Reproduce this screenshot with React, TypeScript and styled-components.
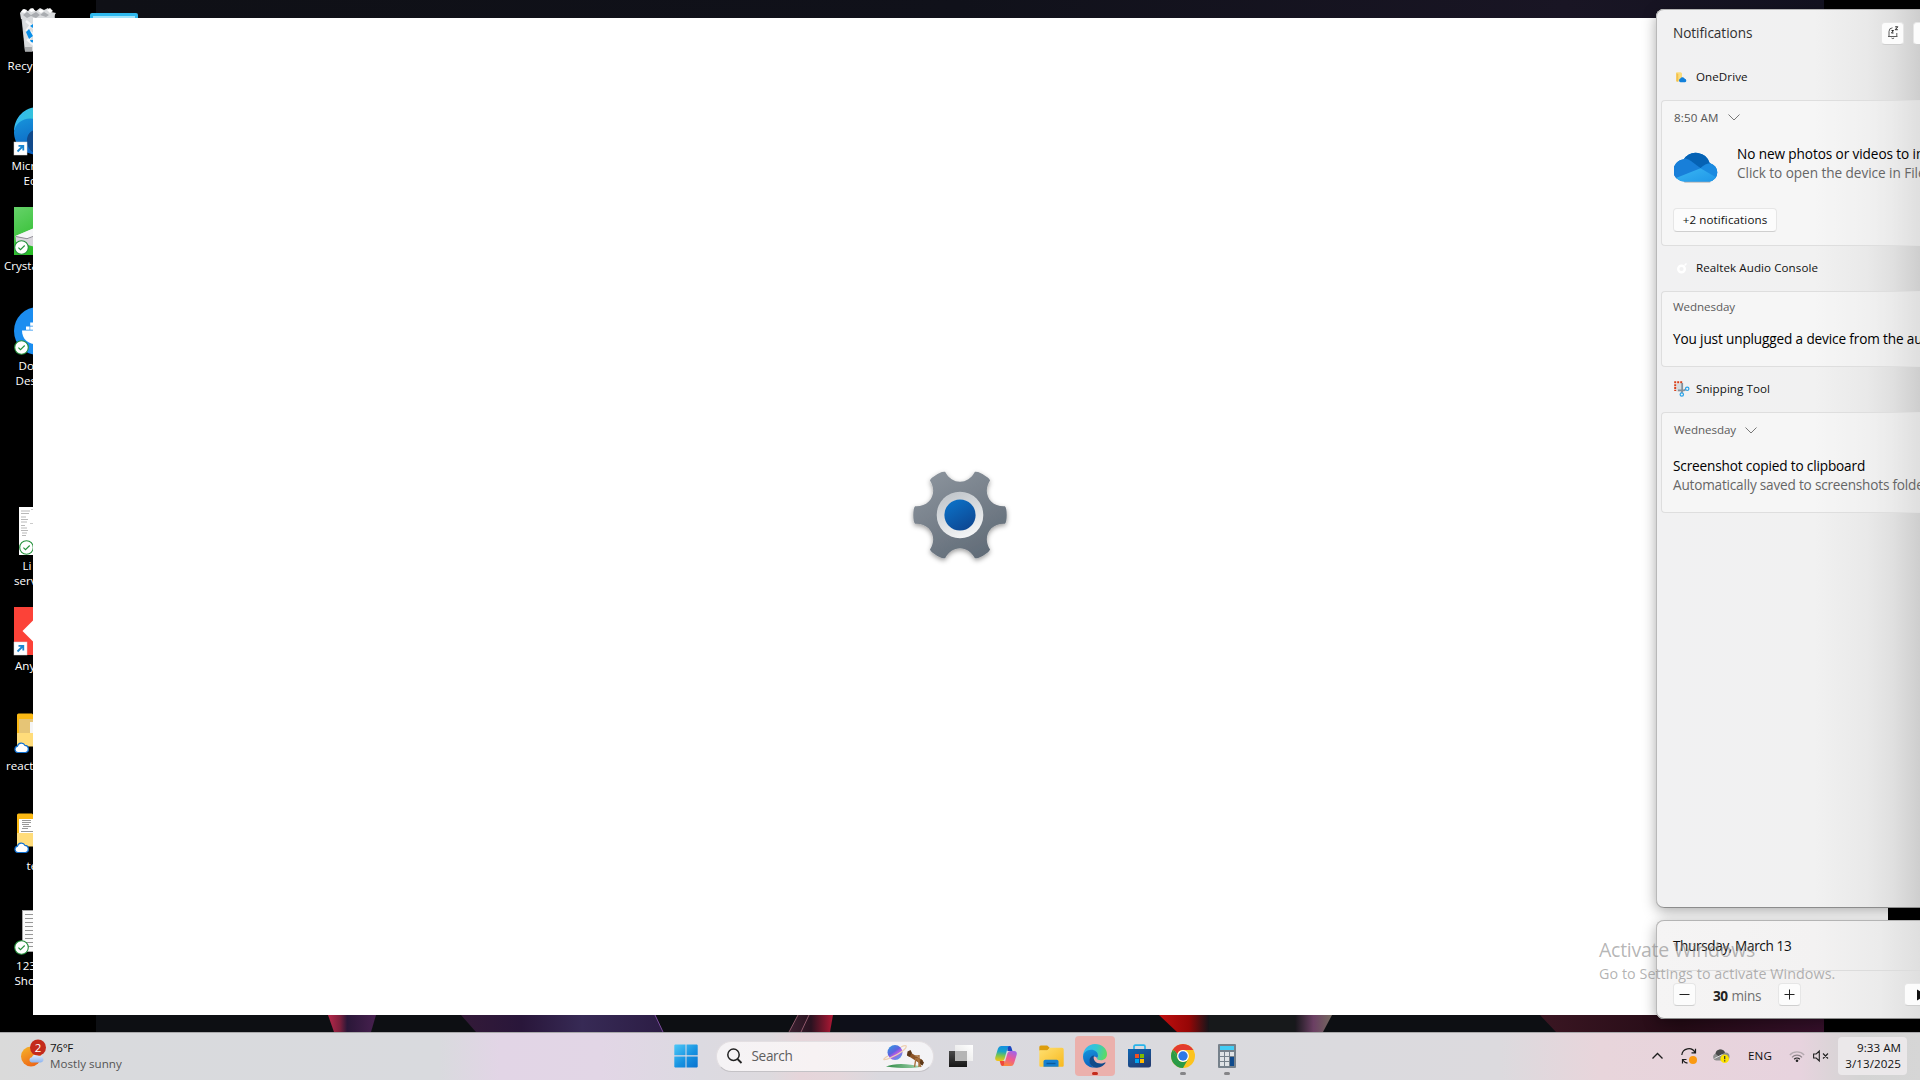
import React from "react";
import styled, { createGlobalStyle } from "styled-components";

const Global = createGlobalStyle`
  * { box-sizing: border-box; }
  body { margin: 0; background: #000; font-family: "Open Sans", "Noto Sans", sans-serif; }
  svg { display: block; flex: none; overflow: visible; }
`;

const Screen = styled.div`
  position: relative;
  width: 1920px;
  height: 1080px;
  overflow: hidden;
  background: #000;
  display: flex;
  flex-direction: column;
`;

const Text = styled.span<{ $size?: number; $track?: number; $color?: string; $weight?: number; $line?: number }>`
  font-size: ${(p) => p.$size ?? 11.6}px;
  letter-spacing: ${(p) => p.$track ?? 0}px;
  color: ${(p) => p.$color ?? "#111"};
  font-weight: ${(p) => p.$weight ?? 400};
  line-height: ${(p) => p.$line ?? 16}px;
  white-space: nowrap;
`;

/* ---------- desktop ---------- */

const Desktop = styled.div`
  position: relative;
  flex: none;
  height: 1032px;
  display: flex;
`;

const Wallpaper = styled.div`
  position: absolute;
  inset: 0 96px 0 96px;
  display: flex;
  flex-direction: column;
  justify-content: flex-end;
  background: linear-gradient(90deg, #0f1016, #10111a 50%, #191524 85%, #131220);
`;

const IconColumn = styled.div<{ $top: number; $left: number }>`
  position: relative;
  display: flex;
  flex-direction: column;
  flex: none;
  width: 76px;
  padding-top: ${(p) => p.$top}px;
  padding-left: ${(p) => p.$left}px;
`;

const IconCell = styled.div<{ $skip?: boolean }>`
  height: 100px;
  margin-bottom: ${(p) => (p.$skip ? 100 : 0)}px;
  display: flex;
  flex-direction: column;
`;

const IconArt = styled.div`
  padding-left: 14px;
  height: 51px;
`;

const IconLabel = styled(Text)<{ $indent: number }>`
  padding-left: ${(p) => p.$indent}px;
  color: #fff;
  line-height: 15px;
`;

const Check = () => (
  <g>
    <circle cx="7.5" cy="40.5" r="6.8" fill="#fff" stroke="#23903a" strokeWidth="1.1" />
    <path d="M4.4 40.6l2.1 2.1 4.2-4.2" fill="none" stroke="#23903a" strokeWidth="1.1" />
  </g>
);
const Shortcut = () => (
  <g>
    <rect x="0" y="35" width="13" height="13" fill="#fff" stroke="#d8d8d8" strokeWidth=".5" />
    <path d="M3.5 44.5l5-5M4.5 38.8h4.8v4.8" fill="none" stroke="#1a86d0" strokeWidth="1.8" />
  </g>
);
const CloudBadge = () => (
  <path d="M3.8 45.5a3.2 3.2 0 0 1-.3-6.3 4 4 0 0 1 7.5-.8 3.6 3.6 0 0 1 .6 7.1z" fill="#fff" stroke="#0f6fd0" strokeWidth="1.2" />
);

const Bin = () => (
  <svg width="48" height="48">
    <path d="M7 7l4 37.5h26L41 7z" fill="#c8cacc" />
    <path d="M8 8l3 36h26l3-36z" fill="#dfe1e3" opacity=".8" />
    <path d="M6 6l3-4 5 2 3-3 5 3 4-3 4 2 4-2 3 4 5 1-2 3 1 3H7z" fill="#d9dbdd" />
    <path d="M7 5l3-3 3 1-2 3zM15 3l4-2 2 3-4 1zM24 4l3-2 3 2-3 2zM33 3l3-2 3 3-3 2z" fill="#fff" />
    <path d="M9 8l4-3 4 3 5-3 4 3 4-3 5 3-3 2-6-2-4 3-5-2-4 2z" fill="#a9acb0" />
    <path d="M12 14l5 4-4 5 6 4-5 6 6 5M22 12l-3 8 4 6" stroke="#f5f6f7" strokeWidth="2.5" fill="none" />
    <path d="M16 19l6-4 6 4-3 3-6-1zM15 22l4 7-4 3-3-7zM16 33h8v4l-7-2z" fill="#0a8fe8" />
    <path d="M11 40h7v4.500h-7z" fill="#a8abad" />
  </svg>
);
const EdgeArt = ({ size = 48 }: { size?: number }) => (
  <svg width={size} height={size} viewBox="0 0 48 48">
    <defs>
      <linearGradient id="edgeTop" x1="0" y1=".4" x2="1" y2=".6">
        <stop offset="0" stopColor="#35b8f2" />
        <stop offset=".5" stopColor="#33c6d2" />
        <stop offset="1" stopColor="#5fdc5c" />
      </linearGradient>
      <linearGradient id="edgeBody" x1="0" y1="0" x2=".3" y2="1">
        <stop offset="0" stopColor="#1795dc" />
        <stop offset="1" stopColor="#0b62c0" />
      </linearGradient>
    </defs>
    <path d="M0 25C0 10 11 0 24 0c14 0 24 9.500 24 20 0 8-6 12.500-12 12.500-5 0-8-1.500-8-3 0-1.400 2-2 2-5 0-5-5-9-12-9C8 15.500 1 20 0 25z" fill="url(#edgeTop)" />
    <path d="M0 25c1-8 8-13.500 16-13.500 8 0 14 5 14 12 0 3-2 4-2 6 0-6-12-6-14 2-2 9 6 16 13 16C10 49 0 38 0 25z" fill="url(#edgeBody)" />
    <path d="M27 47.500C18 47.500 12 40 13 32c.8-6 5-9 9-9-3 9 4 16 13 16 4 0 7-1 9-2 .8-.4 1.600.4 1 1.200C41.500 43.500 35 48 27 47.500z" fill="#114a8b" />
  </svg>
);
const EdgeDesktop = () => (
  <svg width="48" height="48">
    <EdgeArt />
    <Shortcut />
  </svg>
);
const Crystal = () => (
  <svg width="48" height="48">
    <defs>
      <linearGradient id="crystalGreen" x1="0" y1="0" x2=".6" y2="1">
        <stop offset="0" stopColor="#66d26a" />
        <stop offset="1" stopColor="#1fb81c" />
      </linearGradient>
    </defs>
    <rect width="48" height="48" fill="url(#crystalGreen)" />
    <path d="M1.500 29l20-8.500V40L2 35z" fill="#d9d6dc" />
    <path d="M1.500 29l20-8.500v8.500l-8 3z" fill="#f6f6f8" />
    <path d="M2 29.500l11 2.200 8-3" stroke="#77747c" fill="none" strokeWidth=".8" />
    <Check />
  </svg>
);
const Docker = () => (
  <svg width="48" height="48">
    <circle cx="24" cy="24" r="24" fill="#1b8df0" />
    <path d="M8 23.500h32c0 9-6 14-16 14S8 32 8 23.500z" fill="#fff" />
    <path d="M12 19.500h3.600v3.200H12zM16.200 19.500h3.600v3.200h-3.600zM16.200 15.600h3.600v3.200h-3.600z" fill="#fff" />
    <Check />
  </svg>
);
const Sheet = () => (
  <svg width="48" height="48">
    <rect x="5" width="38" height="48" fill="#fff" />
    <path d="M7 4h9M7 6.500h8M7 10h5M7 12.500h7M7 15h6M7 18.500h4M7 21h6M7 23.500h7M8 26h5M8 28.500h4" stroke="#b9b9b9" strokeWidth="1" />
    <path d="M17 2.500h3M16 16.500h4" stroke="#ccc" />
    <g transform="translate(5 0)"><Check /></g>
  </svg>
);
const AnyDesk = () => (
  <svg width="48" height="48">
    <rect width="48" height="48" fill="#fc4238" />
    <path d="M8.500 24L24 8.500 39.500 24 24 39.500z" fill="#fff" />
    <Shortcut />
  </svg>
);
const Folder = ({ paper }: { paper?: boolean }) => (
  <svg width="48" height="48">
    <path d="M3 8q0-1.500 1.500-1.500H18l4 4h23V39H3z" fill="#fbb914" />
    {paper ? <rect x="5" y="12" width="38" height="18" fill="#fff" /> : <rect x="5" y="12" width="38" height="20" fill="#e6c576" />}
    {paper ? <path d="M8 13.500h9M8 15.500h9M8 17.500h7M9 19.500h8M8 21.500h6M7 24.500h12" stroke="#999" /> : <path d="M16 15h20v11H16z" fill="#f5f5f5" />}
    <path d="M3 26h42v12q0 1.500-1.500 1.500h-39Q3 39.500 3 38z" fill="#ffdc7a" />
    <CloudBadge />
  </svg>
);
const TextDoc = () => (
  <svg width="48" height="48">
    <rect x="8.500" y="3.500" width="32" height="41" fill="#fbfbfb" stroke="#a5a5a5" />
    <path d="M11 7.500h28M11 11.500h28M11 15.500h28M11 19.500h28M11 23.500h28M11 27.500h28M11 31.500h28M11 35.500h28M14 39.500h28" stroke="#979797" strokeWidth="1" />
    <Check />
  </svg>
);

const desktopIcons: { art: React.ReactNode; lines: [string, number][]; skip?: boolean }[] = [
  { art: <Bin />, lines: [["Recy", 7.5]] },
  { art: <EdgeDesktop />, lines: [["Micr", 11.5], ["Ed", 23.5]] },
  { art: <Crystal />, lines: [["Crysta", 4]] },
  { art: <Docker />, lines: [["Do", 18.5], ["Des", 15.5]], skip: true },
  { art: <Sheet />, lines: [["Li", 22.5], ["serv", 14]] },
  { art: <AnyDesk />, lines: [["Any", 15]] },
  { art: <Folder />, lines: [["react_", 6]] },
  { art: <Folder paper />, lines: [["te", 26.5]] },
  { art: <TextDoc />, lines: [["123", 16], ["Sho", 14.5]] },
];

const MonitorArt = () => (
  <svg width="48" height="48">
    <rect width="48" height="40" rx="2" fill="#2fb9ee" />
    <rect x="3" y="3" width="42" height="34" fill="#9fe4fb" />
  </svg>
);

const WallpaperArt = () => (
  <svg width="1728" height="17" viewBox="96 1015 1728 17">
    <defs>
      <linearGradient id="petal"><stop offset="0" stopColor="#b8284a" /><stop offset=".25" stopColor="#7c1f3c" /><stop offset=".4" stopColor="#2a1738" /><stop offset="1" stopColor="#47204f" /></linearGradient>
      <linearGradient id="violet"><stop offset="0" stopColor="#331a38" /><stop offset=".3" stopColor="#29163a" /><stop offset=".6" stopColor="#372a55" /><stop offset="1" stopColor="#2c1d45" /></linearGradient>
      <linearGradient id="ribbon"><stop offset="0" stopColor="#3a2130" /><stop offset=".5" stopColor="#2a1220" /><stop offset="1" stopColor="#b01834" /></linearGradient>
      <linearGradient id="scarlet"><stop offset="0" stopColor="#c01010" /><stop offset=".6" stopColor="#960606" /><stop offset="1" stopColor="#15151a" /></linearGradient>
      <linearGradient id="mist"><stop offset="0" stopColor="#17171b" /><stop offset=".5" stopColor="#6b3f63" /><stop offset="1" stopColor="#74695f" /></linearGradient>
      <linearGradient id="maroon"><stop offset="0" stopColor="#3a1622" /><stop offset=".5" stopColor="#250b16" /><stop offset="1" stopColor="#35102a" /></linearGradient>
    </defs>
    <rect x="96" y="1015" width="1728" height="17" fill="#0d0f13" />
    <rect x="840" y="1015" width="310" height="17" fill="#0e0f19" />
    <path d="M328 1015h48l-5 17h-37z" fill="url(#petal)" />
    <path d="M461 1015h194l8 17H476z" fill="url(#violet)" />
    <path d="M655 1015l8 17" stroke="#7b4b9c" />
    <path d="M798 1015h35l-3 17h-41z" fill="url(#ribbon)" />
    <path d="M798 1015l-9 17M809 1015l-8 17" stroke="#a7687c" strokeWidth=".8" />
    <path d="M1159 1015h50v17h-32z" fill="url(#scarlet)" />
    <rect x="1209" y="1015" width="90" height="17" fill="#17191b" />
    <path d="M1295 1015h37l-9 17h-28z" fill="url(#mist)" />
    <path d="M1540 1015h284v17h-268z" fill="url(#maroon)" />
  </svg>
);

/* ---------- settings window ---------- */

const SplashWindow = styled.div`
  position: absolute;
  left: 33px;
  top: 18px;
  width: 1855px;
  height: 997px;
  padding: 0 1px 3px 0;
  background: #fff;
  display: flex;
  align-items: center;
  justify-content: center;
`;

const at = (deg: number, r: number) => {
  const a = (deg * Math.PI) / 180;
  return `${(Math.cos(a) * r).toFixed(2)},${(Math.sin(a) * r).toFixed(2)}`;
};
const gearPath = () => {
  let d = `M${at(-11, 45.8)}`;
  for (let k = 0; k < 6; k++) {
    const b = k * 60;
    d += ` Q${at(b - 9.5, 46.5)} ${at(b - 7, 46.6)} Q${at(b, 47.2)} ${at(b + 7, 46.6)} Q${at(b + 9.5, 46.5)} ${at(b + 11, 45.8)}`;
    d += ` C${at(b + 15, 31)} ${at(b + 45, 31)} ${at(b + 49, 45.8)}`;
  }
  return d + "Z";
};

const Gear = () => (
  <svg width="94" height="94" viewBox="-47 -47 94 94">
    <defs>
      <linearGradient id="gearBody" x1=".2" y1="0" x2=".8" y2="1"><stop offset="0" stopColor="#8b939c" /><stop offset="1" stopColor="#5f6a76" /></linearGradient>
      <linearGradient id="gearRing" x1=".3" y1="0" x2=".7" y2="1"><stop offset="0" stopColor="#c0c5ca" /><stop offset="1" stopColor="#f6f7f8" /></linearGradient>
      <linearGradient id="gearCore" x1=".2" y1="0" x2=".8" y2="1"><stop offset="0" stopColor="#0b72c8" /><stop offset="1" stopColor="#0d4590" /></linearGradient>
      <filter id="gearShadow" x="-20%" y="-20%" width="140%" height="140%"><feDropShadow dx="0" dy="2" stdDeviation="2.500" floodOpacity=".4" /></filter>
    </defs>
    <path d={gearPath()} fill="url(#gearBody)" filter="url(#gearShadow)" />
    <circle r="23.300" fill="url(#gearRing)" />
    <circle r="15.600" fill="url(#gearCore)" />
  </svg>
);

/* ---------- notification centre ---------- */

const Panel = styled.section<{ $top: number; $height: number; $soft?: boolean }>`
  position: absolute;
  left: 1656px;
  top: ${(p) => p.$top}px;
  width: 264px;
  height: ${(p) => p.$height}px;
  overflow: hidden;
  border-radius: 8px 0 0 8px;
  display: flex;
  flex-direction: column;
  background: ${(p) =>
    p.$soft
      ? "linear-gradient(90deg, #f5f4f4, #f3f2f2 60%, #ebebeb 85%, #dfdfdf)"
      : "linear-gradient(90deg, #f1f1f2, #f1f1f1 60%, #e9e9e9 80%, #dfdfdf 90%, #cecece)"};
  box-shadow: inset 1px 0 0 #b9b9b9, inset 0 1px 0 #b4b4b4, inset 0 -1px 0 #8c8c8c;
`;

const PanelShadow = styled.div<{ $top: number; $height: number }>`
  position: absolute;
  left: 1656px;
  top: ${(p) => p.$top}px;
  width: 264px;
  height: ${(p) => p.$height}px;
  border-radius: 8px 0 0 8px;
  box-shadow: 0 4px 14px rgba(0, 0, 0, 0.34);
`;

const PanelHeader = styled.header`
  display: flex;
  align-items: center;
  height: 48px;
  padding-left: 17px;
  flex: none;
`;

const Button = styled.button<{ $w?: number; $h?: number }>`
  display: flex;
  align-items: center;
  justify-content: center;
  width: ${(p) => p.$w ?? 23}px;
  height: ${(p) => p.$h ?? 23}px;
  padding: 0;
  flex: none;
  font: inherit;
  border: 1px solid #e6e6e6;
  border-bottom-color: #cfcfcf;
  border-radius: 4px;
  background: #fcfcfc;
`;

const HeaderButtons = styled.div`
  display: flex;
  gap: 9px;
  margin-left: auto;
  width: 39px;
`;

const AppRow = styled.div<{ $h: number; $end?: number }>`
  display: flex;
  align-items: center;
  flex: none;
  height: ${(p) => p.$h}px;
  padding: 0 0 ${(p) => p.$end ?? 2}px 18px;
  gap: 7px;
`;

const IconSlot = styled.div`
  width: 15px;
  height: 16px;
  display: flex;
  align-items: center;
  justify-content: center;
`;

const Card = styled.article<{ $h: number }>`
  flex: none;
  height: ${(p) => p.$h}px;
  margin-left: 5px;
  padding-left: 11px;
  border: 1px solid #dedede;
  border-right: 0;
  border-radius: 4px 0 0 4px;
  background: rgba(255, 255, 255, 0.35);
  overflow: hidden;
`;

const CardTime = styled.div<{ $h: number; $shift?: number }>`
  display: flex;
  align-items: center;
  gap: 9px;
  height: ${(p) => p.$h}px;
  padding-left: ${(p) => p.$shift ?? 0}px;
`;

const CardBody = styled.div<{ $pad: number }>`
  display: flex;
  padding-top: ${(p) => p.$pad}px;
`;

const Thumb = styled.div`
  width: 64px;
  height: 38px;
  flex: none;
  padding: 8px 0 0 1px;
`;

const Lines = styled.div`
  display: flex;
  flex-direction: column;
`;

const Chevron = () => (
  <svg width="12" height="7"><path d="M.5.5L6 6 11.500.5" fill="none" stroke="#777" /></svg>
);

const BellArt = () => (
  <svg width="12" height="14" viewBox="0 0 12 14">
    <path d="M1 10.500h9.500M2 10V5.500A3.700 3.700 0 0 1 5.500 1.800M9.800 7v3M4.500 12q1.300 1.200 2.600 0" fill="none" stroke="#4a4a4a" strokeWidth=".9" />
    <path d="M4.500 4.500h2L4.500 7h2M8.200.8h2.600L8.200 3.700h2.600" fill="none" stroke="#222" strokeWidth="1" />
  </svg>
);

const OneDriveFolder = () => (
  <svg width="11" height="11" viewBox="0 0 11 11">
    <path d="M.3.300h4.500l1.200 1V8L.3 9.500z" fill="#fbdc7e" />
    <path d="M.3 1l2 1v8l-2-.7z" fill="#f2c14c" />
    <path d="M4.500 10.300a2 2 0 0 1-.2-3.800 2.500 2.500 0 0 1 4.500.300 1.800 1.800 0 0 1 .2 3.500z" fill="#1280da" />
  </svg>
);

const OneDriveCloud = () => (
  <svg width="46" height="32" viewBox="0 0 46 32">
    <defs>
      <linearGradient id="odBase" x1="0" y1="0" x2="1" y2="1"><stop offset="0" stopColor="#3ab6f3" /><stop offset="1" stopColor="#1c93e6" /></linearGradient>
      <clipPath id="odClip"><path d="M11 29.500A10.500 10.500 0 0 1 9.700 7.500 14.500 14.500 0 0 1 35.800 11.200 9.300 9.300 0 0 1 35.500 29.500z" /></clipPath>
    </defs>
    <path d="M11 29.700h24.500" stroke="#000" strokeOpacity=".22" strokeWidth="2" strokeLinecap="round" />
    <g clipPath="url(#odClip)">
      <rect width="46" height="32" fill="#1484df" />
      <path d="M8 8L14 0h20l4 12-10 5z" fill="#0562b4" />
      <path d="M0 6q10-2 17 3l10 7.500L0 28z" fill="#187fd9" />
      <path d="M26 16.500q6-6 13-5l8 6v12z" fill="#1a8ae0" />
      <path d="M2 26l24.500-9.800L44 26.500 36 32H8z" fill="url(#odBase)" />
    </g>
  </svg>
);

const RealtekArt = () => (
  <svg width="14" height="14"><circle cx="6.500" cy="8" r="3.300" fill="none" stroke="#fff" strokeWidth="2.400" /><path d="M9.500 4.500l2-2" stroke="#fff" strokeWidth="1.500" /></svg>
);

const SnipArt = () => (
  <svg width="16" height="16" viewBox="0 0 16 16">
    <path d="M2.500 2.500h6v8h-6z" fill="#d6dade" />
    <path d="M.2 1.200h8" stroke="#d8401a" strokeWidth="2" strokeDasharray="2 1" />
    <path d="M1.200 3.200v6.800" stroke="#d8401a" strokeWidth="2" strokeDasharray="2 .8" />
    <path d="M8.200 2v8l-.5 2M4 9.300h6l1.500-.8" fill="none" stroke="#84909a" strokeWidth="1.800" />
    <circle cx="13.200" cy="7.800" r="1.700" fill="none" stroke="#2aa3e8" strokeWidth="1.200" />
    <circle cx="7.800" cy="13.500" r="1.700" fill="none" stroke="#2aa3e8" strokeWidth="1.200" />
  </svg>
);

const DateRow = styled.div`
  height: 51px;
  flex: none;
  display: flex;
  align-items: center;
  padding: 2px 0 0 17px;
  border-bottom: 1px solid #dcdcdc;
`;

const FocusRow = styled.div`
  display: flex;
  align-items: center;
  flex: 1;
  padding: 0 0 1px 17px;
`;

const Minutes = styled.div`
  display: flex;
  gap: 4px;
  width: 82px;
  padding: 2px 0 0 17px;
`;

const PlaySlot = styled.div`
  margin-left: auto;
  width: 16px;
`;

const Watermark = styled.div`
  position: absolute;
  left: 1599px;
  top: 936px;
  display: flex;
  flex-direction: column;
`;

/* ---------- taskbar ---------- */

const Taskbar = styled.footer`
  position: relative;
  flex: none;
  height: 48px;
  padding-bottom: 1px;
  display: flex;
  align-items: center;
  border-top: 1px solid #a9a9ab;
  background: linear-gradient(
    90deg,
    #dadada 0, #d9dadd 96px, #d9dade 440px, #e2d5e6 500px, #e2d6e6 600px, #dcdae1 700px, #dddade 770px,
    #e6d5da 800px, #e4d7db 840px, #dad9df 880px, #dadade 1180px, #dcdade 1500px, #e8d5db 1600px, #e7d3de 1800px, #dcd4d8 1830px, #d4d4d4 1860px, #d6d6d6 1920px
  );
`;

const Weather = styled.div`
  display: flex;
  width: 666px;
  padding-left: 21px;
  gap: 4px;
`;

const AppButton = styled.div<{ $active?: boolean; $dot?: string; $nudge?: number }>`
  position: relative;
  width: 40px;
  height: 40px;
  margin-right: 4px;
  padding-right: ${(p) => p.$nudge ?? 0}px;
  border-radius: 4px;
  flex: none;
  display: flex;
  align-items: center;
  justify-content: center;
  background: ${(p) => (p.$active ? "#ebb0ac" : "transparent")};
  &::after {
    content: "";
    position: absolute;
    bottom: 1px;
    left: 17px;
    width: 6px;
    height: 3px;
    border-radius: 2px;
    background: ${(p) => p.$dot ?? "transparent"};
  }
`;

const SearchBox = styled.div`
  display: flex;
  align-items: center;
  width: 218px;
  height: 31px;
  margin: 0 9px 0 6px;
  padding: 0 8px 0 10px;
  border-radius: 16px;
  border: 1px solid #e3dfe2;
  border-bottom-color: #c4c2c6;
  background: linear-gradient(90deg, #f5f3f5, #f7f2f3 45%, #f3f3f6);
`;

const SearchLabel = styled(Text)`
  margin-left: 9.5px;
  flex: 1;
`;

const Tray = styled.div`
  margin-left: auto;
  display: flex;
  align-items: center;
  padding-right: 13px;
  height: 46px;
`;

const TrayItem = styled.div<{ $w: number }>`
  width: ${(p) => p.$w}px;
  flex: none;
  display: flex;
  align-items: center;
`;

const Clock = styled.div`
  display: flex;
  flex-direction: column;
  align-items: flex-end;
  justify-content: center;
  width: 69px;
  height: 38px;
  padding: 0 6px 0 0;
  border-radius: 4px;
  background: #ebe8ea;
`;

const WeatherArt = () => (
  <svg width="25" height="30" viewBox="0 0 25 30">
    <defs>
      <linearGradient id="sun" x1="0" y1="0" x2=".5" y2="1"><stop offset="0" stopColor="#f5b62c" /><stop offset="1" stopColor="#ee6a17" /></linearGradient>
      <linearGradient id="sunCloud" x1="0" y1="0" x2="0" y2="1"><stop offset="0" stopColor="#e4effc" /><stop offset="1" stopColor="#8db4f0" /></linearGradient>
    </defs>
    <circle cx="10" cy="16.500" r="10" fill="url(#sun)" />
    <path d="M10.500 22.500a2.700 2.700 0 0 1 .2-5.300 4.200 4.200 0 0 1 7.300-1.200 3.400 3.400 0 0 1 2 6.500z" fill="url(#sunCloud)" />
    <circle cx="17" cy="7.500" r="8" fill="#c42b1c" />
    <text x="17" y="11.800" textAnchor="middle" fontSize="11.500" fill="#fff" fontFamily="Open Sans, sans-serif">2</text>
  </svg>
);

const StartArt = () => (
  <svg width="24" height="24" viewBox="0 0 24 24">
    <defs><linearGradient id="start" gradientUnits="userSpaceOnUse" x1="0" y1="0" x2="22" y2="24"><stop offset="0" stopColor="#4fcaf8" /><stop offset=".6" stopColor="#1490e0" /><stop offset="1" stopColor="#0a74d0" /></linearGradient></defs>
    <path d="M1 .5h10.500v10.800H.3V1.200zM12.500.5H23l.7.700v10.100H12.500zM.3 12.400h11.200v11.100H1l-.7-.7zM12.500 12.400h11.200v10.400l-.7.700H12.500z" fill="url(#start)" />
  </svg>
);

const SearchArt = () => (
  <svg width="15" height="16" viewBox="0 0 15 16"><circle cx="6.500" cy="6.800" r="5.700" fill="none" stroke="#222" strokeWidth="1.500" /><path d="M10.500 11l4 4" stroke="#222" strokeWidth="1.800" /></svg>
);

const PlanetArt = () => (
  <svg width="42" height="25" viewBox="0 0 42 25">
    <defs><linearGradient id="planet" x1=".1" y1="0" x2=".8" y2="1"><stop offset="0" stopColor="#2f9ae0" /><stop offset=".45" stopColor="#5d63e0" /><stop offset=".6" stopColor="#b45ae4" /><stop offset="1" stopColor="#3fa5e8" /></linearGradient>
      <linearGradient id="grass"><stop offset="0" stopColor="#2e8a45" /><stop offset="1" stopColor="#a9d8b5" /></linearGradient></defs>
    <path d="M3 22.500q12-5 36 0-12 3-36 0z" fill="url(#grass)" />
    <circle cx="12" cy="8.500" r="7.500" fill="url(#planet)" />
    <path d="M5 12C-2 16 .5 17 8 13.500 16 10 25 4 23 1.800 22.200 1 20 2 18 3" fill="none" stroke="#edcfb2" strokeWidth="1.300" />
    <path d="M26 7.500l14 9-2.200 3.500-14-9z" fill="#8b5427" />
    <path d="M24.500 7.500l3-1.500 1.500 3-2.500 4-2.500-1.500zM38 15l3 3.500-1.500 3-3-1.500z" fill="#5d3818" />
    <path d="M33 14l-1.500 9M34 14l4 9M36 11v12M32 12h4" stroke="#a8713d" strokeWidth="1.400" fill="none" />
  </svg>
);

const TaskViewArt = () => (
  <svg width="24" height="22" viewBox="0 0 24 22">
    <defs><linearGradient id="tvDark" x1="0" y1="0" x2="0" y2="1"><stop offset="0" stopColor="#4a4a4a" /><stop offset="1" stopColor="#161616" /></linearGradient>
    <linearGradient id="tvLight" x1="0" y1="1" x2="1" y2="0"><stop offset="0" stopColor="#e2e2e2" /><stop offset="1" stopColor="#fff" /></linearGradient></defs>
    <rect y="6" width="18" height="16" fill="url(#tvDark)" />
    <rect x="6" width="18" height="16" fill="url(#tvLight)" />
    <rect x="6" y="6" width="12" height="10" fill="#b5b5b5" />
  </svg>
);

const CopilotArt = () => (
  <svg width="22" height="22" viewBox="0 0 22 22">
    <defs>
      <linearGradient id="cpLeft" x1=".4" y1="0" x2=".3" y2="1"><stop offset="0" stopColor="#1590e0" /><stop offset=".35" stopColor="#16a5c8" /><stop offset=".65" stopColor="#7fc54a" /><stop offset="1" stopColor="#f6c414" /></linearGradient>
      <linearGradient id="cpRight" x1=".7" y1="0" x2=".3" y2="1"><stop offset="0" stopColor="#a263e8" /><stop offset=".5" stopColor="#ee5a92" /><stop offset="1" stopColor="#fa8a3c" /></linearGradient>
    </defs>
    <path d="M12 1h2.600q1.400 0 1.800 1.400L17.500 6h-5z" fill="#1b47c0" />
    <path d="M6 1h8.500q-1.500.3-2 2.200L9.600 13.500Q9 16 6.500 16H3C.8 16-.3 14.500.3 12.300L3 3.500Q3.800 1 6 1z" fill="url(#cpLeft)" />
    <path d="M10 21H7.400q-1.400 0-1.700-1.400L4.700 16h4.800z" fill="#f04a3a" />
    <path d="M16 21H7.500q1.500-.3 2-2.200L12.400 8.500Q13 6 15.500 6H19c2.200 0 3.300 1.500 2.700 3.700L19 18.500Q18.200 21 16 21z" fill="url(#cpRight)" />
  </svg>
);

const ExplorerArt = () => (
  <svg width="25" height="22" viewBox="0 0 25 22">
    <defs><linearGradient id="exFold" x1="0" y1="0" x2="1" y2="1"><stop offset="0" stopColor="#ffe071" /><stop offset="1" stopColor="#f8b91f" /></linearGradient></defs>
    <path d="M.3 2Q.3.500 1.800.500h6.400l2.500 2.200-2.500 3H.3z" fill="#dd9d0c" />
    <path d="M.3 5.200h8l2.500-2.400H23q1.700 0 1.700 1.700v16q0 1.200-1.200 1.200h-22Q.3 21.700.3 20.500z" fill="url(#exFold)" />
    <path d="M4.500 21.700v-5.200q0-1.800 1.800-1.800h11.400q1.800 0 1.800 1.800v5.200z" fill="#1580d0" />
    <path d="M7.500 17.800h9v1.400h-9z" fill="#0a5a9c" />
  </svg>
);

const StoreArt = () => (
  <svg width="23" height="24" viewBox="0 0 23 24">
    <defs><linearGradient id="store" x1="0" y1="0" x2=".6" y2="1"><stop offset="0" stopColor="#0d66b4" /><stop offset="1" stopColor="#233d72" /></linearGradient></defs>
    <path d="M6 6V2.500Q6 1.200 7.300 1.200h8.400Q17 1.200 17 2.500V6" fill="none" stroke="#28b4ea" strokeWidth="1.700" />
    <path d="M0 5h23v16q0 2.500-2.500 2.500h-18Q0 23.500 0 21z" fill="url(#store)" />
    <path d="M7 10h4v4H7z" fill="#f25022" /><path d="M12 10h4v4h-4z" fill="#7fba00" />
    <path d="M7 15h4v4H7z" fill="#00a4ef" /><path d="M12 15h4v4h-4z" fill="#ffb900" />
  </svg>
);

const ChromeArt = () => (
  <svg width="24" height="24" viewBox="-12 -12 24 24">
    <circle r="12" fill="#fcc31e" />
    <path d="M-10.390-6A12 12 0 0 0 0 12L5.200 3A6 6 0 0 1-5.200 3z" fill="#2a9b48" />
    <path d="M-10.390-6A12 12 0 0 1 10.390-6H0A6 6 0 0 0-5.700-1.800L-8-5z" fill="#e33b2e" />
    <path d="M-10.390-6L-5.200 3-5.700-1.800-8-5z" fill="#2a9b48" />
    <circle r="5.900" fill="#fff" /><circle r="4.700" fill="#2f78e6" />
  </svg>
);

const CalcArt = () => (
  <svg width="18" height="24" viewBox="0 0 18 24">
    <rect width="18" height="24" rx="1" fill="#76818b" />
    <rect x="2" y="2" width="14" height="4" fill="#43cdf4" />
    <path d="M2 8h4v4H2zM7 8h4v4H7zM12 8h4v4h-4zM2 13h4v4H2zM7 13h4v4H7zM2 18h4v4H2zM7 18h4v4H7z" fill="#dfe3e6" />
    <path d="M12 13h4v9h-4z" fill="#0f4a8c" />
  </svg>
);

const SyncArt = () => (
  <svg width="16" height="16" viewBox="0 0 16 16">
    <path d="M.8 7A7 7 0 0 1 14 4.500M14.500.8v4h-4M6.500 15.200A7 7 0 0 1 1.800 12M1.500 15.500v-4h4" fill="none" stroke="#1c1c1c" strokeWidth="1.200" />
    <circle cx="12" cy="12" r="4" fill="#fa9a12" />
  </svg>
);

const CloudWarnArt = () => (
  <svg width="16" height="14" viewBox="0 0 16 14">
    <path d="M3.500 11.500A3.500 3.500 0 0 1 2.500 4.700 5 5 0 0 1 12 3.500 4 4 0 0 1 13 11.500z" fill="#8e8e8e" />
    <path d="M2.500 4.700A5 5 0 0 1 12 3.500L6 7.500z" fill="#4a4a4a" />
    <path d="M1.500 9.500l8-4" stroke="#ddd" />
    <circle cx="11.700" cy="9.700" r="4.300" fill="#fde300" />
    <path d="M11.700 7v3.300M11.700 11.200v1.200" stroke="#333" strokeWidth="1.200" />
  </svg>
);

const WifiArt = () => (
  <svg width="16" height="12" viewBox="0 0 16 12">
    <path d="M.8 5a10 10 0 0 1 14.400 0" fill="none" stroke="#b3a9af" strokeWidth="1.200" />
    <path d="M3 7.300a7 7 0 0 1 10 0" fill="none" stroke="#8d8489" strokeWidth="1.200" />
    <path d="M5.200 9.300a4 4 0 0 1 5.600 0" fill="none" stroke="#222" strokeWidth="1.300" />
    <circle cx="8" cy="10.800" r="1.300" fill="#222" />
  </svg>
);

const MuteArt = () => (
  <svg width="16" height="12" viewBox="0 0 16 12"><path d="M.6 4h2.600L6.300 1v10L3.200 8H.6zM10 3.500l5 5M15 3.500l-5 5" fill="none" stroke="#222" strokeWidth="1.100" /></svg>
);

export default function App() {
  return (
    <Screen>
      <Global />
      <Desktop>
        <Wallpaper><WallpaperArt /></Wallpaper>
        <IconColumn $top={7} $left={0}>
          {desktopIcons.map((icon, i) => (
            <IconCell key={i} $skip={icon.skip}>
              <IconArt>{icon.art}</IconArt>
              {icon.lines.map(([label, indent]) => (
                <IconLabel key={label} $indent={indent}>{label}</IconLabel>
              ))}
            </IconCell>
          ))}
        </IconColumn>
        <IconColumn $top={13} $left={14}><MonitorArt /></IconColumn>

        <SplashWindow><Gear /></SplashWindow>

        <PanelShadow $top={9} $height={898} />
        <PanelShadow $top={920} $height={99} />

        <Panel $top={9} $height={899}>
          <PanelHeader>
            <Text $size={13.6} $track={-0.05} $color="#303030">Notifications</Text>
            <HeaderButtons>
              <Button><BellArt /></Button>
              <Button />
            </HeaderButtons>
          </PanelHeader>

          <AppRow $h={43} $end={3}>
            <IconSlot><OneDriveFolder /></IconSlot>
            <Text $track={0.07}>OneDrive</Text>
          </AppRow>
          <Card $h={146}>
            <CardTime $h={33} $shift={1}>
              <Text $track={0.12} $color="#555">8:50 AM</Text>
              <Chevron />
            </CardTime>
            <CardBody $pad={10}>
              <Thumb><OneDriveCloud /></Thumb>
              <Lines>
                <Text $size={13.6} $track={-0.09} $color="#000" $line={19}>No new photos or videos to im</Text>
                <Text $size={13.6} $track={-0.05} $color="#666" $line={19}>Click to open the device in File</Text>
              </Lines>
            </CardBody>
            <CardBody $pad={26}>
              <Button $w={104} $h={24}><Text $track={0.11}>+2 notifications</Text></Button>
            </CardBody>
          </Card>

          <AppRow $h={45}>
            <IconSlot><RealtekArt /></IconSlot>
            <Text $track={0.07}>Realtek Audio Console</Text>
          </AppRow>
          <Card $h={76}>
            <CardTime $h={30}><Text $track={-0.08} $color="#5c5c5c">Wednesday</Text></CardTime>
            <CardBody $pad={7}>
              <Text $size={13.6} $track={-0.14} $color="#000" $line={20}>You just unplugged a device from the au</Text>
            </CardBody>
          </Card>

          <AppRow $h={45}>
            <IconSlot><SnipArt /></IconSlot>
            <Text $track={0.06}>Snipping Tool</Text>
          </AppRow>
          <Card $h={101}>
            <CardTime $h={34} $shift={1}>
              <Text $track={-0.08} $color="#5c5c5c">Wednesday</Text>
              <Chevron />
            </CardTime>
            <CardBody $pad={9}>
              <Lines>
                <Text $size={13.6} $track={-0.15} $color="#000" $line={19}>Screenshot copied to clipboard</Text>
                <Text $size={13.6} $track={-0.2} $color="#666" $line={19}>Automatically saved to screenshots folde</Text>
              </Lines>
            </CardBody>
          </Card>
        </Panel>

        <Panel $top={920} $height={99} $soft>
          <DateRow><Text $size={13.6} $track={-0.38}>Thursday, March 13</Text></DateRow>
          <FocusRow>
            <Button><svg width="11" height="11"><path d="M.5 5.500h10" stroke="#222" /></svg></Button>
            <Minutes>
              <Text $size={13.6} $weight={700} $track={-0.5} $color="#222">30</Text>
              <Text $size={13.6} $track={-0.28} $color="#707070">mins</Text>
            </Minutes>
            <Button><svg width="11" height="11"><path d="M.5 5.500h10M5.500.5v10" stroke="#222" /></svg></Button>
            <PlaySlot>
              <Button $w={36}><svg width="10" height="12"><path d="M0 .5l9 5.500-9 5.500z" fill="#111" /></svg></Button>
            </PlaySlot>
          </FocusRow>
        </Panel>

        <Watermark>
          <Text $size={19.5} $track={-0.25} $color="rgba(128,128,128,0.58)" $line={28}>Activate Windows</Text>
          <Text $size={14.3} $track={0.06} $color="rgba(128,128,128,0.6)" $line={19}>Go to Settings to activate Windows.</Text>
        </Watermark>
      </Desktop>

      <Taskbar>
        <Weather>
          <WeatherArt />
          <Lines>
            <Text $track={-0.3}>76°F</Text>
            <Text $track={0.03} $color="#555">Mostly sunny</Text>
          </Lines>
        </Weather>
        <AppButton><StartArt /></AppButton>
        <SearchBox>
          <SearchArt />
          <SearchLabel $size={13.6} $track={-0.34} $color="#5e5e5e">Search</SearchLabel>
          <PlanetArt />
        </SearchBox>
        <AppButton $nudge={4}><TaskViewArt /></AppButton>
        <AppButton $nudge={2}><CopilotArt /></AppButton>
        <AppButton><ExplorerArt /></AppButton>
        <AppButton $active $dot="#c42b1c"><EdgeArt size={24} /></AppButton>
        <AppButton><StoreArt /></AppButton>
        <AppButton $dot="#858588"><ChromeArt /></AppButton>
        <AppButton $dot="#858588"><CalcArt /></AppButton>
        <Tray>
          <TrayItem $w={29}><svg width="11" height="6"><path d="M.5 5.500l5-5 5 5" fill="none" stroke="#1c1c1c" strokeWidth="1.300" /></svg></TrayItem>
          <TrayItem $w={32}><SyncArt /></TrayItem>
          <TrayItem $w={35}><CloudWarnArt /></TrayItem>
          <TrayItem $w={41}><Text $track={0.16}>ENG</Text></TrayItem>
          <TrayItem $w={24}><WifiArt /></TrayItem>
          <TrayItem $w={25}><MuteArt /></TrayItem>
          <Clock>
            <Text $track={0.04}>9:33 AM</Text>
            <Text $track={0.09}>3/13/2025</Text>
          </Clock>
        </Tray>
      </Taskbar>
    </Screen>
  );
}
